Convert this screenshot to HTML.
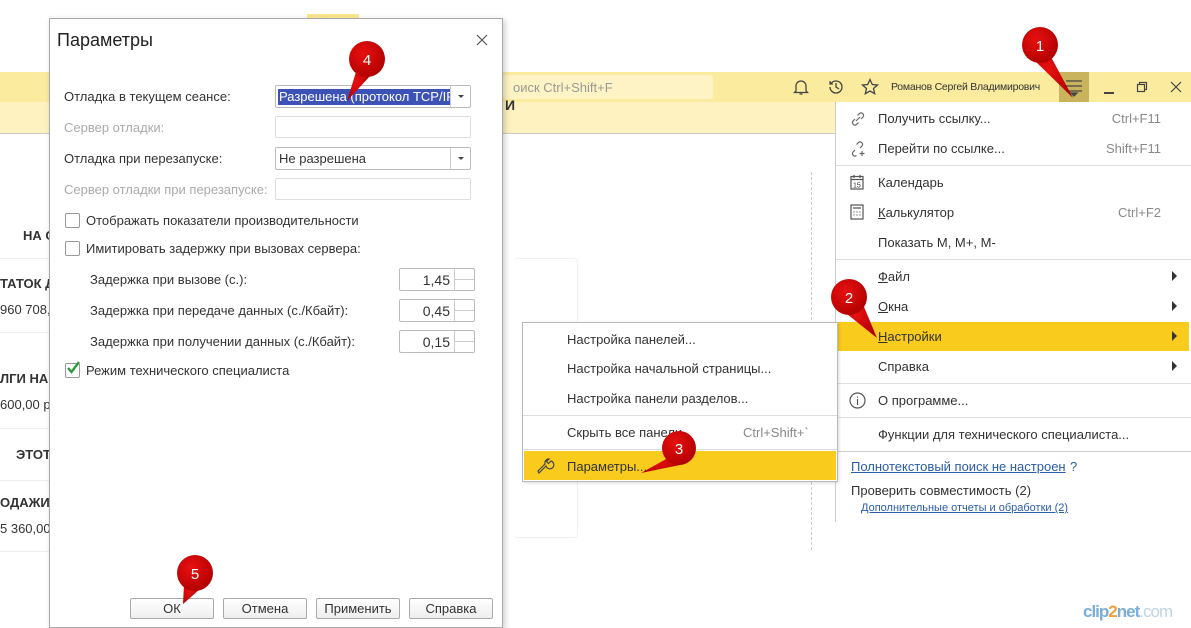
<!DOCTYPE html><html><head><meta charset="utf-8"><style>
*{margin:0;padding:0;box-sizing:border-box}
body{width:1191px;height:625px;overflow:hidden;background:#fff;position:relative;font-family:"Liberation Sans",sans-serif;font-size:13px;color:#333}
.a{position:absolute;white-space:nowrap}
.bg{font-weight:bold;color:#333}
.mi{position:absolute;left:878px;white-space:nowrap;color:#333}
.sc{position:absolute;right:30px;color:#888;white-space:nowrap}
.sep{position:absolute;height:1px;background:#ddd}
.inp{position:absolute;border:1px solid #bbb;border-radius:2px;background:#fff}
.dis{border-color:#ddd}
.cb{position:absolute;width:15px;height:15px;border:1px solid #999;border-radius:2px;background:#fff}
.btn{position:absolute;top:598px;height:21px;border:1px solid #aaa;border-radius:2px;background:linear-gradient(#fff,#eee);text-align:center;line-height:19px;font-size:13px;color:#333}
.arr{position:absolute;right:14px;width:0;height:0;border-top:5px solid transparent;border-bottom:5px solid transparent;border-left:5px solid #333}
</style></head><body>
<div class="a" style="left:307px;top:14px;width:52px;height:5px;background:#fbe88e"></div>
<div class="a" style="left:0;top:72px;width:1191px;height:30px;background:#fbeb9e"></div>
<div class="a" style="left:0;top:102px;width:835px;height:32px;background:#fdf2c0;border-bottom:1px solid #ccc"></div>
<div class="a" style="left:503px;top:75px;width:210px;height:24px;background:#fdf3c4;border-radius:3px"></div>
<div class="a" style="left:513px;top:80px;color:#999;font-size:13px">оиск Ctrl+Shift+F</div>
<div class="a bg" style="left:505px;top:97px;font-size:14px">И</div>
<div class="a bg" style="left:23px;top:228px">НА С</div>
<div class="a bg" style="left:0;top:276px">ТАТОК Д</div>
<div class="a" style="left:0;top:302px">960 708,</div>
<div class="a bg" style="left:0;top:371px">ЛГИ НАЦ</div>
<div class="a" style="left:0;top:397px">600,00 р</div>
<div class="a bg" style="left:16px;top:447px">ЭТОТ</div>
<div class="a bg" style="left:0;top:495px">ОДАЖИ</div>
<div class="a" style="left:0;top:521px">5 360,00</div>
<div class="a" style="left:0;top:258px;width:49px;height:1px;background:#eee"></div>
<div class="a" style="left:0;top:332px;width:49px;height:1px;background:#eee"></div>
<div class="a" style="left:0;top:428px;width:49px;height:1px;background:#eee"></div>
<div class="a" style="left:0;top:480px;width:49px;height:1px;background:#eee"></div>
<div class="a" style="left:0;top:551px;width:49px;height:1px;background:#eee"></div>
<div class="a" style="left:811px;top:172px;height:378px;border-left:1px dashed #ccc"></div>
<div class="a" style="left:513px;top:258px;width:65px;height:280px;border:1px solid #f0f0f0;border-left:none;border-radius:4px"></div>
<svg class="a" style="left:792px;top:78px" width="18" height="18" viewBox="0 0 18 18" fill="none" stroke="#444" stroke-width="1.3"><path d="M4 13V8a5 5 0 0110 0v5l1.5 1.5h-13z M7.5 16h3"/></svg>
<svg class="a" style="left:827px;top:78px" width="18" height="18" viewBox="0 0 18 18" fill="none" stroke="#444" stroke-width="1.3"><path d="M3 9a6 6 0 106-6 6 6 0 00-5 2.5M3 3v3h3M9 5v4l3 2"/></svg>
<svg class="a" style="left:861px;top:78px" width="18" height="18" viewBox="0 0 18 18" fill="none" stroke="#444" stroke-width="1.3"><path d="M9 1.5l2.3 5 5.2.5-4 3.5 1.2 5.2L9 13l-4.7 2.7 1.2-5.2-4-3.5 5.2-.5z"/></svg>
<div class="a" style="left:891px;top:81px;font-size:10.5px;letter-spacing:-0.25px;color:#333">Романов Сергей Владимирович</div>
<div class="a" style="left:1059px;top:72px;width:30px;height:30px;background:#c9b35c"></div>
<svg class="a" style="left:1064px;top:78px" width="20" height="20" viewBox="0 0 20 20" stroke="#444" stroke-width="1.2"><path d="M2 3h16M2 8h16M2 13h16"/><path d="M7 15h6l-3 3z" fill="#444"/></svg>
<div class="a" style="left:1104px;top:92px;width:10px;height:1.5px;background:#444"></div>
<svg class="a" style="left:1136px;top:81px" width="12" height="12" viewBox="0 0 12 12" fill="none" stroke="#444" stroke-width="1.2"><rect x="1.5" y="3.5" width="7" height="7"/><path d="M3.5 3.5v-2h7v7h-2"/></svg>
<svg class="a" style="left:1170px;top:81px" width="12" height="12" viewBox="0 0 12 12" stroke="#444" stroke-width="1.2"><path d="M1 1l10 10M11 1L1 11"/></svg>
<div class="a" style="left:835px;top:102px;width:356px;height:420px;background:#fff;border-left:1px solid #ccc"></div>
<svg class="a" style="left:849px;top:110px" width="18" height="18" viewBox="0 0 18 18" fill="none" stroke="#666" stroke-width="1.2"><path d="M7 11l4-4M6 9l-2 2a2.5 2.5 0 003.5 3.5l2-2M12 9l2-2a2.5 2.5 0 00-3.5-3.5l-2 2"/></svg>
<div class="mi" style="top:111px">Получить ссылку...</div><div class="sc" style="top:111px">Ctrl+F11</div>
<svg class="a" style="left:849px;top:140px" width="18" height="18" viewBox="0 0 18 18" fill="none" stroke="#666" stroke-width="1.2"><path d="M6 10l-2 2a2.5 2.5 0 003.5 3.5M11 8l2-2a2.5 2.5 0 00-3.5-3.5l-2 2M13 11v5M10.5 13.5h5"/></svg>
<div class="mi" style="top:141px">Перейти по ссылке...</div><div class="sc" style="top:141px">Shift+F11</div>
<div class="sep" style="left:836px;top:165px;width:355px"></div>
<svg class="a" style="left:850px;top:174px" width="14" height="16" viewBox="0 0 14 16" fill="none" stroke="#555" stroke-width="1.2"><rect x="1" y="2.5" width="12" height="12.5"/><path d="M1 5.5h12M4 1v3M10 1v3"/><text x="3" y="13.5" font-size="7" fill="#333" stroke="none" font-family="Liberation Sans">15</text></svg>
<div class="mi" style="top:175px">Календарь</div>
<svg class="a" style="left:850px;top:204px" width="14" height="16" viewBox="0 0 14 16" fill="none" stroke="#555" stroke-width="1.2"><rect x="1" y="1" width="12" height="14"/><path d="M3 4h8M3.5 8h1M6.5 8h1M9.5 8h1M3.5 11h1M6.5 11h1M9.5 11h1"/></svg>
<div class="mi" style="top:205px"><u>К</u>алькулятор</div><div class="sc" style="top:205px">Ctrl+F2</div>
<div class="mi" style="top:235px">Показать M, M+, M-</div>
<div class="sep" style="left:836px;top:259px;width:355px"></div>
<div class="mi" style="top:269px"><u>Ф</u>айл</div><div class="arr" style="top:271px"></div>
<div class="mi" style="top:299px"><u>О</u>кна</div><div class="arr" style="top:301px"></div>
<div class="a" style="left:838px;top:322px;width:351px;height:29px;background:#f8cb1c"></div>
<div class="mi" style="top:329px"><u>Н</u>астройки</div><div class="arr" style="top:331px"></div>
<div class="mi" style="top:359px">Справка</div><div class="arr" style="top:361px"></div>
<div class="sep" style="left:836px;top:383px;width:355px"></div>
<svg class="a" style="left:849px;top:392px" width="17" height="17" viewBox="0 0 17 17" fill="none" stroke="#555" stroke-width="1.2"><circle cx="8.5" cy="8.5" r="7.5"/><path d="M8.5 7v6M8.5 4.5v1.2"/></svg>
<div class="mi" style="top:393px">О программе...</div>
<div class="sep" style="left:836px;top:417px;width:355px"></div>
<div class="mi" style="top:427px">Функции для технического специалиста...</div>
<div class="sep" style="left:836px;top:451px;width:355px;background:#ccc"></div>
<div class="a" style="left:851px;top:459px;color:#2a5caa;text-decoration:underline">Полнотекстовый поиск не настроен</div>
<div class="a" style="left:1070px;top:459px;color:#2a5caa">?</div>
<div class="a" style="left:851px;top:483px;color:#333">Проверить совместимость (2)</div>
<div class="a" style="left:861px;top:502px;color:#2a5caa;font-size:11px;text-decoration:underline">Дополнительные отчеты и обработки (2)</div>
<div class="a" style="left:522px;top:322px;width:316px;height:160px;background:#fff;border:1px solid #bbb;box-shadow:1px 1px 3px rgba(0,0,0,.15)"></div>
<div class="a" style="left:567px;top:332px">Настройка панелей...</div>
<div class="a" style="left:567px;top:361px">Настройка начальной страницы...</div>
<div class="a" style="left:567px;top:391px">Настройка панели разделов...</div>
<div class="sep" style="left:523px;top:415px;width:314px"></div>
<div class="a" style="left:567px;top:425px">Скрыть все панели</div>
<div class="a" style="left:743px;top:425px;color:#888">Ctrl+Shift+`</div>
<div class="sep" style="left:523px;top:449px;width:314px"></div>
<div class="a" style="left:524px;top:451px;width:312px;height:29px;background:#f8cb1c"></div>
<svg class="a" style="left:537px;top:457px" width="18" height="18" viewBox="0 0 18 18" fill="none" stroke="#444" stroke-width="1.2"><path d="M2 16l7-7a4 4 0 105-5l-2.5 2.5-2-2L12 2a4 4 0 00-4 5l-7 7z"/></svg>
<div class="a" style="left:567px;top:459px">Параметры...</div>
<div class="a" style="left:49px;top:18px;width:454px;height:610px;background:#fff;border:1px solid #aaa;box-shadow:2px 2px 6px rgba(0,0,0,.2)"></div>
<div class="a" style="left:57px;top:30px;font-size:18px;color:#222">Параметры</div>
<svg class="a" style="left:476px;top:34px" width="12" height="12" viewBox="0 0 12 12" stroke="#555" stroke-width="1.2"><path d="M1 1l10 10M11 1L1 11"/></svg>
<div class="a" style="left:64px;top:89px">Отладка в текущем сеансе:</div>
<div class="inp" style="left:275px;top:85px;width:196px;height:23px"><div class="a" style="left:2px;top:3px;width:172px;height:16px;background:#3d52b6;color:#fff;padding-left:1px;overflow:hidden">Разрешена (протокол TCP/IP)</div><div class="a" style="left:174px;top:0;width:1px;height:21px;background:#ccc"></div><div class="a" style="left:182px;top:9px;border-left:3px solid transparent;border-right:3px solid transparent;border-top:3px solid #444"></div></div>
<div class="a" style="left:64px;top:120px;color:#aaa">Сервер отладки:</div>
<div class="inp dis" style="left:275px;top:116px;width:196px;height:22px"></div>
<div class="a" style="left:64px;top:151px">Отладка при перезапуске:</div>
<div class="inp" style="left:275px;top:147px;width:196px;height:23px"><div class="a" style="left:3px;top:3px">Не разрешена</div><div class="a" style="left:174px;top:0;width:1px;height:21px;background:#ccc"></div><div class="a" style="left:182px;top:9px;border-left:3px solid transparent;border-right:3px solid transparent;border-top:3px solid #444"></div></div>
<div class="a" style="left:64px;top:182px;color:#aaa">Сервер отладки при перезапуске:</div>
<div class="inp dis" style="left:275px;top:178px;width:196px;height:22px"></div>
<div class="cb" style="left:65px;top:213px"></div><div class="a" style="left:86px;top:213px">Отображать показатели производительности</div>
<div class="cb" style="left:65px;top:241px"></div><div class="a" style="left:86px;top:241px">Имитировать задержку при вызовах сервера:</div>
<div class="a" style="left:90px;top:272px">Задержка при вызове (с.):</div>
<div class="a" style="left:90px;top:303px">Задержка при передаче данных (с./Кбайт):</div>
<div class="a" style="left:90px;top:334px">Задержка при получении данных (с./Кбайт):</div>
<div class="inp" style="left:399px;top:268px;width:76px;height:23px"><div class="a" style="right:24px;top:3px;font-size:14px">1,45</div><div class="a" style="left:54px;top:0;width:1px;height:21px;background:#ccc"></div><div class="a" style="left:55px;top:10px;width:19px;height:1px;background:#ccc"></div></div>
<div class="inp" style="left:399px;top:299px;width:76px;height:23px"><div class="a" style="right:24px;top:3px;font-size:14px">0,45</div><div class="a" style="left:54px;top:0;width:1px;height:21px;background:#ccc"></div><div class="a" style="left:55px;top:10px;width:19px;height:1px;background:#ccc"></div></div>
<div class="inp" style="left:399px;top:330px;width:76px;height:23px"><div class="a" style="right:24px;top:3px;font-size:14px">0,15</div><div class="a" style="left:54px;top:0;width:1px;height:21px;background:#ccc"></div><div class="a" style="left:55px;top:10px;width:19px;height:1px;background:#ccc"></div></div>
<div class="cb" style="left:65px;top:363px"></div>
<svg class="a" style="left:65px;top:360px" width="16" height="16" viewBox="0 0 16 16" fill="none" stroke="#2a9a3a" stroke-width="2.4"><path d="M3 8l3.5 4L14 2"/></svg>
<div class="a" style="left:86px;top:363px">Режим технического специалиста</div>
<div class="btn" style="left:130px;width:84px">ОК</div>
<div class="btn" style="left:223px;width:84px">Отмена</div>
<div class="btn" style="left:316px;width:84px">Применить</div>
<div class="btn" style="left:409px;width:84px">Справка</div>
<div class="a" style="left:1083px;top:602px;font-size:17px;font-weight:bold;color:#7aaed8;letter-spacing:-1px">clip<span style="color:#f0a040">2</span>net<span style="color:#c0d4e6;font-weight:normal">.com</span></div>
<svg class="a" style="left:0;top:0" width="1191" height="625">
<defs><radialGradient id="g" cx=".4" cy=".35" r=".7"><stop offset="0" stop-color="#e81010"/><stop offset="1" stop-color="#b00000"/></radialGradient></defs>
<g fill="url(#g)" font-family="Liberation Sans" font-size="15" text-anchor="middle">
<path d="M1032 58L1073 98L1050 55z"/><circle cx="1040" cy="45" r="18"/><text x="1040" y="51" fill="#fff">1</text>
<path d="M842 310L877 338L862 302z"/><circle cx="849" cy="297" r="18"/><text x="849" y="303" fill="#fff">2</text>
<path d="M668 458L641 473L680 465z"/><circle cx="679" cy="448" r="17"/><text x="679" y="454" fill="#fff">3</text>
<path d="M356 72L347 101L370 76z"/><circle cx="367" cy="59" r="18"/><text x="367" y="65" fill="#fff">4</text>
<path d="M184 584L183 604L200 589z"/><circle cx="195" cy="573" r="18"/><text x="195" y="579" fill="#fff">5</text>
</g></svg>
</body></html>
